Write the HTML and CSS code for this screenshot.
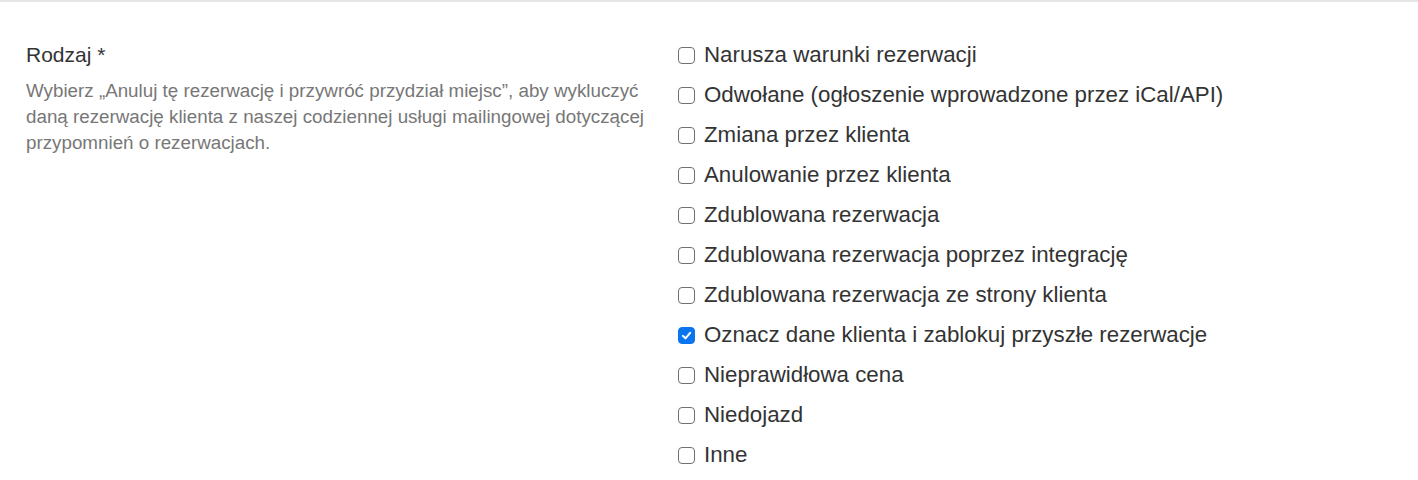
FILE: index.html
```html
<!DOCTYPE html>
<html lang="pl">
<head>
<meta charset="utf-8">
<link rel="stylesheet" href="styles.css">
</head>
<body>
<div class="panel">
  <div class="info">
    <div class="label">Rodzaj *</div>
    <p class="desc">Wybierz „Anuluj tę rezerwację i przywróć przydział miejsc”, aby wykluczyć daną rezerwację klienta z naszej codziennej usługi mailingowej dotyczącej przypomnień o rezerwacjach.</p>
  </div>
  <ul class="options">
    <li class="opt"><span class="box"></span><span>Narusza warunki rezerwacji</span></li>
    <li class="opt"><span class="box"></span><span>Odwołane (ogłoszenie wprowadzone przez iCal/API)</span></li>
    <li class="opt"><span class="box"></span><span>Zmiana przez klienta</span></li>
    <li class="opt"><span class="box"></span><span>Anulowanie przez klienta</span></li>
    <li class="opt"><span class="box"></span><span>Zdublowana rezerwacja</span></li>
    <li class="opt"><span class="box"></span><span>Zdublowana rezerwacja poprzez integrację</span></li>
    <li class="opt"><span class="box"></span><span>Zdublowana rezerwacja ze strony klienta</span></li>
    <li class="opt"><span class="box checked"><svg viewBox="0 0 16 16" width="16" height="16"><path d="M4.2 8.4 L6.9 11 L11.9 5.2" fill="none" stroke="#fff" stroke-width="2.2" stroke-linecap="round" stroke-linejoin="round"/></svg></span><span>Oznacz dane klienta i zablokuj przyszłe rezerwacje</span></li>
    <li class="opt"><span class="box"></span><span>Nieprawidłowa cena</span></li>
    <li class="opt"><span class="box"></span><span>Niedojazd</span></li>
    <li class="opt"><span class="box"></span><span>Inne</span></li>
  </ul>
</div>
</body>
</html>
```
FILE: styles.css
```css
html, body {
  margin: 0;
  padding: 0;
  background: #fff;
}
body {
  font-family: "Liberation Sans", Arial, sans-serif;
  color: #333;
  border-top: 2px solid #e5e5e5;
}
.panel {
  display: flex;
  gap: 26px;
  padding: 33px 26px 0 26px;
}
.info {
  width: 625px;
  flex: none;
}
.label {
  font-size: 21px;
  line-height: 40px;
  color: #333;
}
.desc {
  margin: 3px 0 0 0;
  font-size: 18.8px;
  line-height: 26px;
  color: #777;
}
.options {
  list-style: none;
  margin: 0;
  padding: 0;
}
.opt {
  display: flex;
  align-items: center;
  height: 40px;
  font-size: 22.3px;
  color: #333;
}
.box {
  width: 15px;
  height: 15px;
  border: 1px solid #707070;
  border-radius: 4px;
  margin: 0 9px 0 1px;
  flex: none;
  box-sizing: content-box;
  display: flex;
}
.box.checked {
  background: #0b75f0;
  border-color: #0b75f0;
}
.box.checked svg {
  width: 15px;
  height: 15px;
}
```
